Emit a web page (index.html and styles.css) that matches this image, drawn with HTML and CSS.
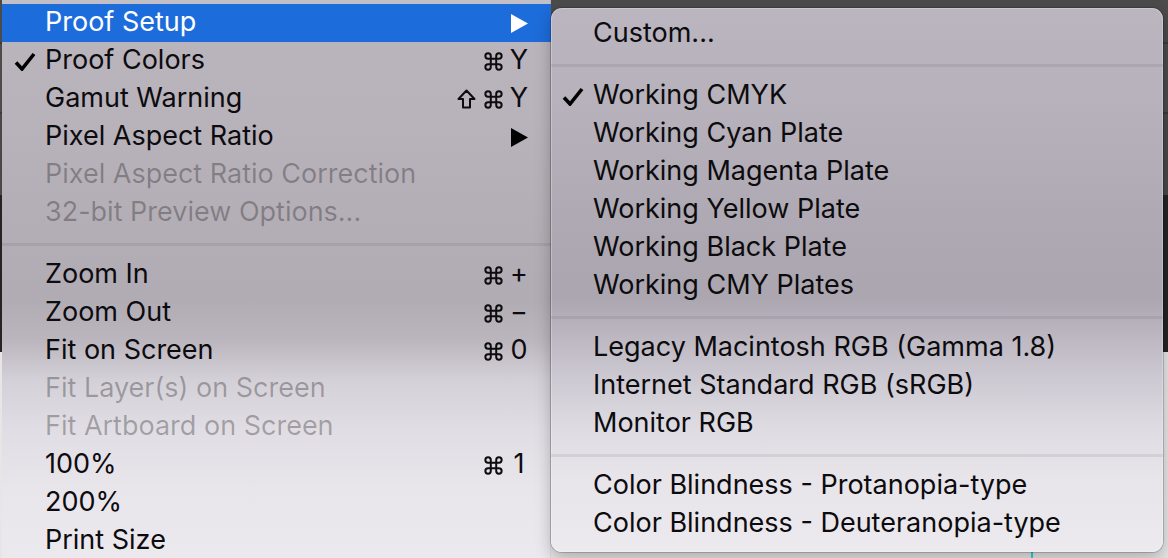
FILE: index.html
```html
<!DOCTYPE html>
<html>
<head>
<meta charset="utf-8">
<link rel="stylesheet" href="styles.css">
</head>
<body>
<div class="screen">
  <div class="menu main">
    <div class="item active">
      <span class="check"></span><span class="label">Proof Setup</span><span class="mods"></span>
      <span class="key"><svg class="arrow" viewBox="0 0 17 19" width="17" height="19"><path d="M0 0 L17 9.5 L0 19 Z" fill="#fff"/></svg></span><span></span>
    </div>
    <div class="item">
      <span class="check"><svg viewBox="0 0 22 19" width="22" height="19"><path d="M2 10.5 L8 17 L20 2" fill="none" stroke="#000" stroke-width="3.6" stroke-linejoin="miter"/></svg></span>
      <span class="label">Proof Colors</span>
      <span class="mods"><svg class="cmd" viewBox="-1.5 -1.5 21 21" width="19" height="19"><path d="M6 15 V3 A3 3 0 1 0 3 6 H15 A3 3 0 1 0 12 3 V15 A3 3 0 1 0 15 12 H3 A3 3 0 1 0 6 15 Z" fill="none" stroke="currentColor" stroke-width="2.2"/></svg></span>
      <span class="key">Y</span><span></span>
    </div>
    <div class="item">
      <span class="check"></span><span class="label">Gamut Warning</span>
      <span class="mods"><svg class="shift" viewBox="0 0 19 20" width="19" height="20"><path d="M9.5 1.5 L17.5 10 H13 V18.5 H6 V10 H1.5 Z" fill="none" stroke="currentColor" stroke-width="2" stroke-linejoin="round"/></svg><svg class="cmd" viewBox="-1.5 -1.5 21 21" width="19" height="19"><path d="M6 15 V3 A3 3 0 1 0 3 6 H15 A3 3 0 1 0 12 3 V15 A3 3 0 1 0 15 12 H3 A3 3 0 1 0 6 15 Z" fill="none" stroke="currentColor" stroke-width="2.2"/></svg></span>
      <span class="key">Y</span><span></span>
    </div>
    <div class="item">
      <span class="check"></span><span class="label">Pixel Aspect Ratio</span><span class="mods"></span>
      <span class="key"><svg class="arrow" viewBox="0 0 17 19" width="17" height="19"><path d="M0 0 L17 9.5 L0 19 Z" fill="#000"/></svg></span><span></span>
    </div>
    <div class="item disabled">
      <span class="check"></span><span class="label">Pixel Aspect Ratio Correction</span><span class="mods"></span><span class="key"></span><span></span>
    </div>
    <div class="item disabled">
      <span class="check"></span><span class="label">32-bit Preview Options...</span><span class="mods"></span><span class="key"></span><span></span>
    </div>
    <div class="sep"></div>
    <div class="item">
      <span class="check"></span><span class="label">Zoom In</span>
      <span class="mods"><svg class="cmd" viewBox="-1.5 -1.5 21 21" width="19" height="19"><path d="M6 15 V3 A3 3 0 1 0 3 6 H15 A3 3 0 1 0 12 3 V15 A3 3 0 1 0 15 12 H3 A3 3 0 1 0 6 15 Z" fill="none" stroke="currentColor" stroke-width="2.2"/></svg></span>
      <span class="key">+</span><span></span>
    </div>
    <div class="item">
      <span class="check"></span><span class="label">Zoom Out</span>
      <span class="mods"><svg class="cmd" viewBox="-1.5 -1.5 21 21" width="19" height="19"><path d="M6 15 V3 A3 3 0 1 0 3 6 H15 A3 3 0 1 0 12 3 V15 A3 3 0 1 0 15 12 H3 A3 3 0 1 0 6 15 Z" fill="none" stroke="currentColor" stroke-width="2.2"/></svg></span>
      <span class="key">−</span><span></span>
    </div>
    <div class="item">
      <span class="check"></span><span class="label">Fit on Screen</span>
      <span class="mods"><svg class="cmd" viewBox="-1.5 -1.5 21 21" width="19" height="19"><path d="M6 15 V3 A3 3 0 1 0 3 6 H15 A3 3 0 1 0 12 3 V15 A3 3 0 1 0 15 12 H3 A3 3 0 1 0 6 15 Z" fill="none" stroke="currentColor" stroke-width="2.2"/></svg></span>
      <span class="key">0</span><span></span>
    </div>
    <div class="item disabled">
      <span class="check"></span><span class="label">Fit Layer(s) on Screen</span><span class="mods"></span><span class="key"></span><span></span>
    </div>
    <div class="item disabled">
      <span class="check"></span><span class="label">Fit Artboard on Screen</span><span class="mods"></span><span class="key"></span><span></span>
    </div>
    <div class="item">
      <span class="check"></span><span class="label">100%</span>
      <span class="mods"><svg class="cmd" viewBox="-1.5 -1.5 21 21" width="19" height="19"><path d="M6 15 V3 A3 3 0 1 0 3 6 H15 A3 3 0 1 0 12 3 V15 A3 3 0 1 0 15 12 H3 A3 3 0 1 0 6 15 Z" fill="none" stroke="currentColor" stroke-width="2.2"/></svg></span>
      <span class="key">1</span><span></span>
    </div>
    <div class="item">
      <span class="check"></span><span class="label">200%</span><span class="mods"></span><span class="key"></span><span></span>
    </div>
    <div class="item">
      <span class="check"></span><span class="label">Print Size</span><span class="mods"></span><span class="key"></span><span></span>
    </div>
  </div>

  <div class="menu sub">
    <div class="sitem"><span class="check"></span><span class="label">Custom...</span></div>
    <div class="sep"></div>
    <div class="sitem"><span class="check"><svg viewBox="0 0 22 19" width="22" height="19"><path d="M2 10.5 L8 17 L20 2" fill="none" stroke="#000" stroke-width="3.6" stroke-linejoin="miter"/></svg></span><span class="label">Working CMYK</span></div>
    <div class="sitem"><span class="check"></span><span class="label">Working Cyan Plate</span></div>
    <div class="sitem"><span class="check"></span><span class="label">Working Magenta Plate</span></div>
    <div class="sitem"><span class="check"></span><span class="label">Working Yellow Plate</span></div>
    <div class="sitem"><span class="check"></span><span class="label">Working Black Plate</span></div>
    <div class="sitem"><span class="check"></span><span class="label">Working CMY Plates</span></div>
    <div class="sep"></div>
    <div class="sitem"><span class="check"></span><span class="label">Legacy Macintosh RGB (Gamma 1.8)</span></div>
    <div class="sitem"><span class="check"></span><span class="label">Internet Standard RGB (sRGB)</span></div>
    <div class="sitem"><span class="check"></span><span class="label">Monitor RGB</span></div>
    <div class="sep light"></div>
    <div class="sitem"><span class="check"></span><span class="label">Color Blindness - Protanopia-type</span></div>
    <div class="sitem"><span class="check"></span><span class="label">Color Blindness - Deuteranopia-type</span></div>
  </div>
</div>
</body>
</html>
```

FILE: styles.css
```css
* { box-sizing: border-box; }
html, body {
  margin: 0;
  padding: 0;
  width: 1168px;
  height: 558px;
  overflow: hidden;
}
body {
  font-family: "Inter", "Noto Sans", sans-serif;
  font-size: 27px;
  color: #0c0b0e;
  background:
    linear-gradient(to right, transparent 1031px, #2fd0d8 1031px, #2fd0d8 1033px, transparent 1033px) 0 552px / 100% 6px no-repeat,
    linear-gradient(to bottom, #4b4b4b 0, #4b4b4b 42px, #3a3a3a 42px, #3a3a3a 44px, #4b4b4b 44px, #4b4b4b 112px, #3a3a3a 112px, #3a3a3a 114px, #484848 114px, #484848 195px, #242424 195px, #242424 352px, #e6e6e6 352px);
}
.screen {
  display: flex;
  align-items: flex-start;
  height: 558px;
}
.menu {
  display: flex;
  flex-direction: column;
}
.main {
  margin-left: 2px;
  width: 549px;
  height: 570px;
  padding-top: 4px;
  background: linear-gradient(to bottom,
    #c3bfc6 0px, #c3bfc6 4px,
    #bab4bd 5px, #b8b2ba 120px, #b3adb5 230px, #b1abb3 300px,
    #bbb6be 340px, #d4d0d8 380px, #e1dde4 430px, #e8e5eb 490px, #ece9ee 558px);
  box-shadow: inset -1px 0 0 rgba(0,0,0,0.06);
}
.sub {
  margin-top: 8px;
  width: 612px;
  height: 544px;
  padding-top: 7px;
  border-radius: 11px;
  background: linear-gradient(to bottom,
    #bab5be 0px, #b6b1ba 100px, #aca7b0 240px, #aba6af 290px,
    #b8b3bd 320px, #cdc9d2 370px, #dedbe2 420px, #e7e4ea 470px, #eceaee 544px);
  box-shadow: 0 0 0 1px rgba(0,0,0,0.18), inset 0 0 0 1px rgba(255,255,255,0.25), 0 6px 16px rgba(0,0,0,0.25);
}
.item {
  display: grid;
  grid-template-columns: 43px 1fr auto 20px 22px;
  align-items: center;
  height: 38px;
  padding-bottom: 4px;
  flex: none;
}
.sitem {
  display: grid;
  grid-template-columns: 42px 1fr;
  align-items: center;
  height: 38px;
  padding-bottom: 3px;
  flex: none;
}
.label {
  white-space: nowrap;
  letter-spacing: 0;
}
.check {
  display: flex;
  align-items: center;
  padding-left: 12px;
  padding-top: 4px;
}
.sitem .check { padding-left: 11px; padding-top: 3px; }
.mods {
  display: flex;
  align-items: center;
  gap: 8px;
  padding-right: 6px;
  padding-top: 4px;
}
.key {
  display: flex;
  align-items: center;
  justify-content: center;
}
.arrow { margin-top: 4px; }
.active {
  background: #1d6cdb;
  color: #fff;
}
.disabled { color: rgba(0,0,0,0.28); }
.sep {
  flex: none;
  height: 24px;
  display: flex;
  align-items: center;
}
.sep::before {
  content: "";
  display: block;
  width: 100%;
  height: 3px;
  background: rgba(70,60,80,0.1);
}
```
